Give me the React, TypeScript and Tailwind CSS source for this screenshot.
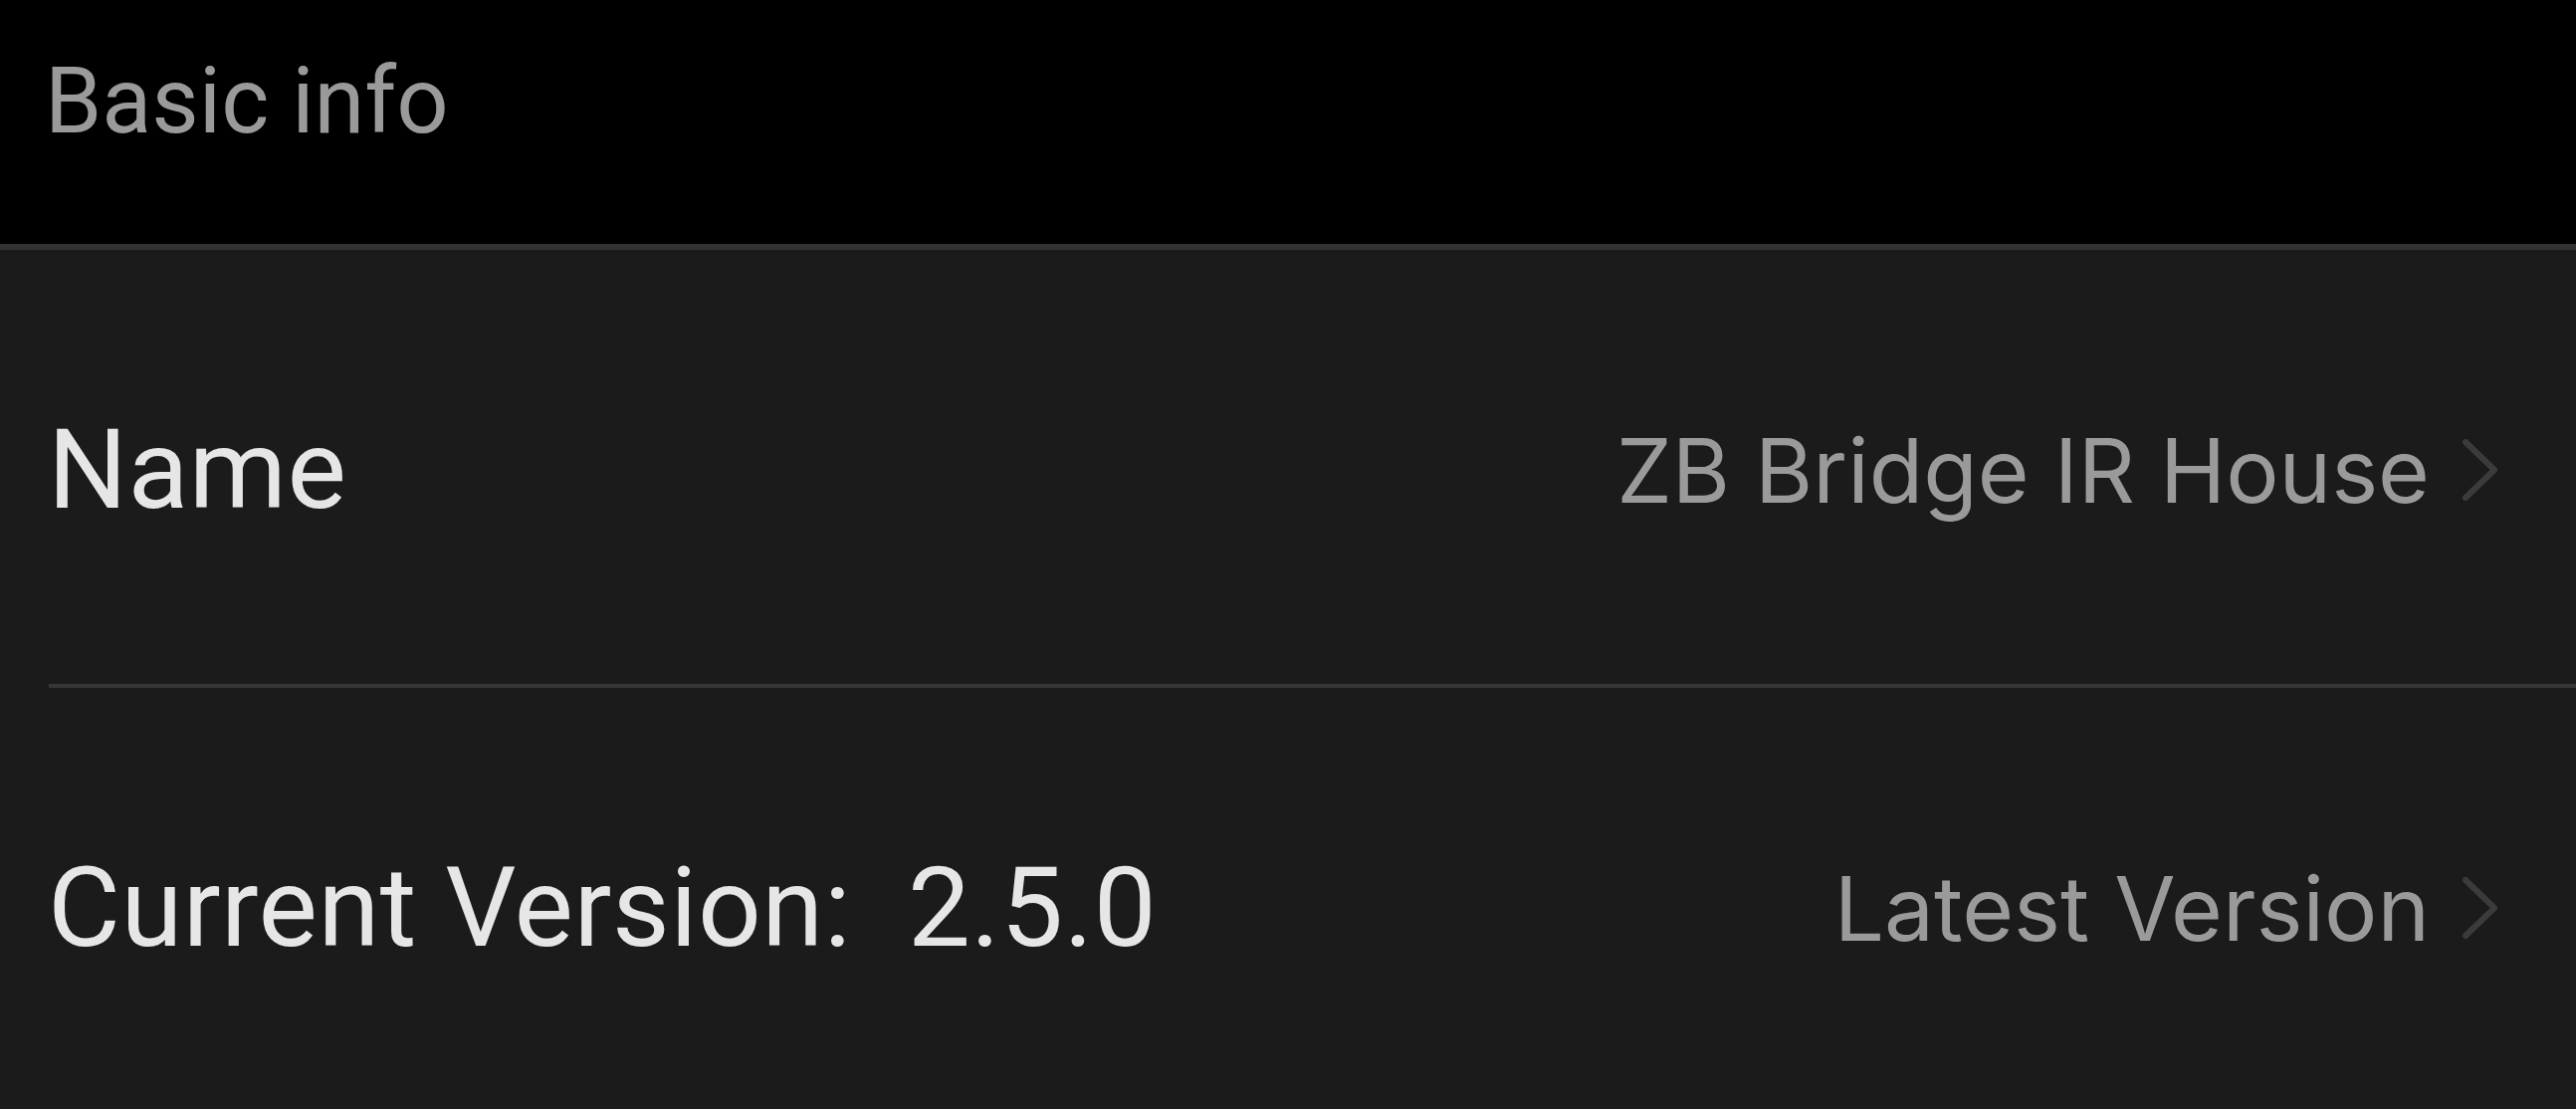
function Chevron() {
  return (
    <svg width="40" height="66" viewBox="0 0 40 66" fill="none" className="shrink-0">
      <path
        d="M5 5 L34 33 L5 61"
        stroke="#3b3b3b"
        strokeWidth="6"
        strokeLinecap="round"
        strokeLinejoin="round"
      />
    </svg>
  );
}

function Row({ label, value }: { label: string; value: string }) {
  return (
    <div className="flex h-[436px] items-center justify-between pl-[48px] pr-[76px] pt-[6px]">
      <span className="text-[112px] leading-none tracking-[0.5px] text-[#e6e6e6] font-['Roboto',sans-serif] whitespace-pre">
        {label}
      </span>
      <div className="flex items-center gap-[31px]">
        <span className="text-[89px] leading-none text-[#9a9a9a] font-['Inter',sans-serif]">
          {value}
        </span>
        <Chevron />
      </div>
    </div>
  );
}

export default function App() {
  return (
    <div className="min-h-screen w-full bg-[#1b1b1b]">
      <div className="h-[245px] bg-black pl-[45px] pt-[56px]">
        <h2 className="text-[92px] leading-none text-[#9a9a9a] font-['Roboto',sans-serif]">
          Basic info
        </h2>
      </div>
      <div className="h-[6px] bg-[#323232]" />
      <Row label="Name" value="ZB Bridge IR House" />
      <div className="ml-[49px] h-[4px] bg-[#363636]" />
      <Row label="Current Version:  2.5.0" value="Latest Version" />
    </div>
  );
}
